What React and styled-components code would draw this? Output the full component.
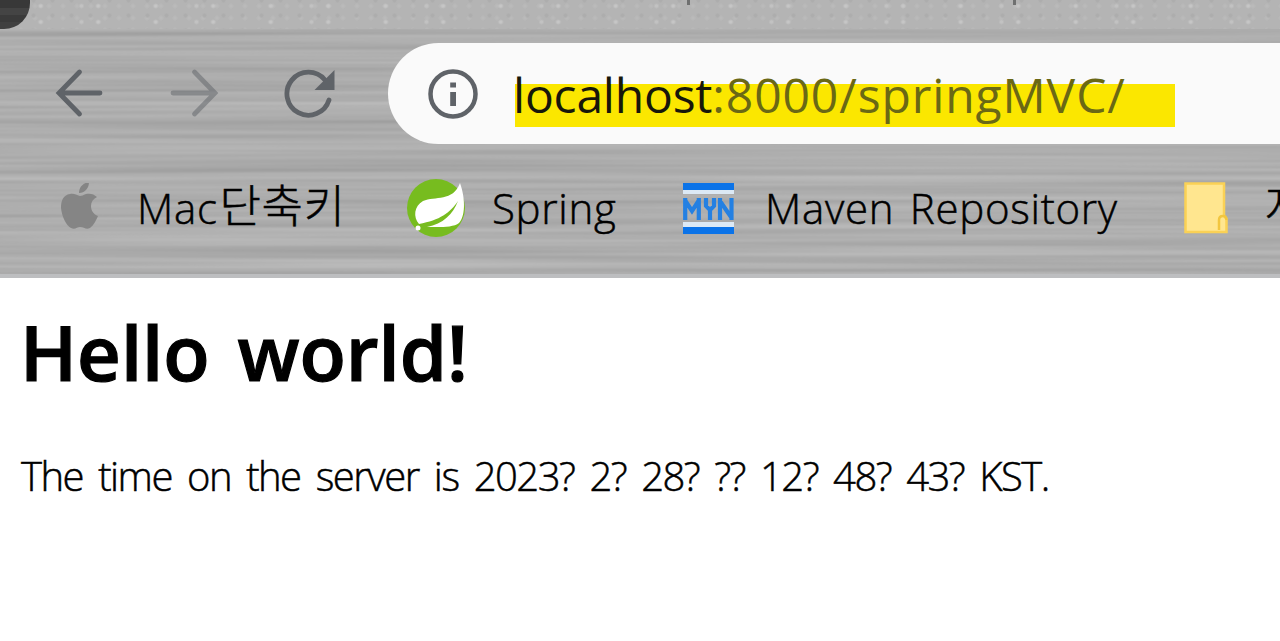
import React from "react"
import styled, { createGlobalStyle } from "styled-components"

const GlobalStyle = createGlobalStyle`
  body {
    margin: 0;
    background: #fff;
    overflow: hidden;
    font-family: "Open Sans", "Noto Sans CJK KR", sans-serif;
  }
`

const Window = styled.div`
  width: 1280px;
  height: 641px;
  overflow: hidden;
  background: #fff;
`

const Chrome = styled.header`
  position: relative;
  isolation: isolate;
  box-sizing: border-box;
  height: 278px;
  overflow: hidden;
  background: #acacac;
`

const Brushed = styled.svg`
  position: absolute;
  inset: 0;
  z-index: -1;
`

const TabStrip = styled.div`
  display: flex;
  height: 29px;
  overflow: hidden;
  background:
    radial-gradient(circle, #c6c6c6 1px, transparent 3px) 12px 14px / 57.5px 16px,
    radial-gradient(circle, #c2c2c2 1px, transparent 3px) 24px 14px / 115px 16px,
    radial-gradient(circle, #adadad 1px, transparent 3px) 5px 8px / 19px 15px,
    radial-gradient(circle, #bababa 1px, transparent 3px) 0 0 / 14px 12px,
    #b4b4b4;
`

const DarkTab = styled.div`
  width: 30px;
  height: 29px;
  border-radius: 0 0 26px 0;
  background: linear-gradient(#383838 0 8px, #444 8px 15px, #3a3a3a 15px 22px, #404040 22px);
`

const Descender = styled.i`
  width: 3px;
  height: 5px;
  margin-left: ${(props) => props.$gap}px;
  background: #6f7070;
`

const Toolbar = styled.div`
  display: flex;
  align-items: center;
  height: 100px;
  padding: 14px 0 0 52px;
`

const NavIcon = styled.svg`
  width: 54px;
  height: 54px;
  margin-right: ${(props) => props.$gap}px;
  flex: none;
  fill: none;
  stroke: #5f6368;
  stroke-width: 4.8;
  stroke-linecap: round;
  opacity: ${(props) => (props.$disabled ? 0.5 : 1)};
`

const AddressBar = styled.div`
  display: flex;
  align-items: center;
  flex: 1;
  box-sizing: border-box;
  height: 101px;
  padding-left: 39px;
  border-radius: 51px 0 0 51px;
  background: #fafafa;
`

const InfoIcon = styled.svg`
  width: 52px;
  height: 52px;
  flex: none;
  margin-right: 35px;
`

const Url = styled.div`
  width: 661px;
  height: 68px;
  box-sizing: border-box;
  line-height: 72px;
  font-size: 48px;
  font-weight: 370;
  text-indent: -1px;
  white-space: nowrap;
  background: linear-gradient(#fbe700, #fbe700) 1px 25px / 660px 43px no-repeat;
`

const UrlText = styled.span`
  letter-spacing: ${(props) => (props.$host ? -0.2 : 0.9)}px;
  color: ${(props) => (props.$host ? "#17170a" : "#6a6815")};
`

const Bookmarks = styled.nav`
  display: flex;
  align-items: center;
  height: 130px;
  padding-left: 60px;
`

const Bookmark = styled.div`
  display: flex;
  align-items: center;
  flex: none;
  width: ${(props) => props.$width}px;
  white-space: nowrap;

  svg {
    flex: none;
    margin-right: ${(props) => props.$gap}px;
  }
`

const Label = styled.span`
  padding-bottom: 1px;
  font-size: 42px;
  font-weight: 340;
  line-height: 58px;
  letter-spacing: 0.7px;
  word-spacing: 4px;
  color: #000;
  -webkit-text-stroke: 0.5px #000;
`

const Korean = styled.span`
  margin-left: 2px;
  font-family: "Noto Sans CJK KR", sans-serif;
  font-size: 45px;
  font-weight: 300;
  line-height: 1;
  letter-spacing: 0.5px;
  vertical-align: 1px;
`

const Page = styled.main`
  padding-left: 20px;
`

const Title = styled.h1`
  margin: 0;
  padding-top: 22px;
  font-size: 76px;
  line-height: 104px;
  font-weight: 640;
  letter-spacing: 0;
  word-spacing: 8px;
  color: #000;
  -webkit-text-stroke: 1.2px #000;
`

const Time = styled.p`
  margin: 0;
  padding: 44px 0 0 1px;
  font-size: 40px;
  line-height: 56px;
  font-weight: 340;
  letter-spacing: -1.5px;
  word-spacing: 6.2px;
  white-space: nowrap;
  color: #000;
  -webkit-text-stroke: 0.5px #000;
`

const BrushedMetal = () => (
  <Brushed width="1280" height="278">
    <filter id="brushed" x="0" y="0" width="100%" height="100%" colorInterpolationFilters="sRGB">
      <feTurbulence type="fractalNoise" baseFrequency="0.0015 0.16" numOctaves="2" seed="8" />
      <feColorMatrix
        values="0.15 0 0 0 0.605
                0.15 0 0 0 0.605
                0.15 0 0 0 0.605
                0 0 0 0 1"
      />
    </filter>
    <rect width="1280" height="278" filter="url(#brushed)" />
    <rect y="274" width="1280" height="4" fill="#bdbec0" />
  </Brushed>
)

const AppleLogo = () => (
  <svg width="42" height="50" viewBox="0 1 42 50" fill="#858585">
    <path d="M19 11C19 5 23 1 29 0C29 6 25 11 19 11Z" />
    <path d="M20 14C16 13 14 11 10 12C3 13 1 19 1 26C2 35 6 43 11 46C15 48 17 45 20 45C24 45 26 48 30 46C34 43 36 38 38 34C33 32 31 28 31 24C31 20 33 17 37 15C34 12 30 11 26 12C23 13 22 14 20 14Z" />
  </svg>
)

const SpringLogo = () => (
  <svg width="60" height="60" viewBox="0 0 60 60">
    <circle cx="30" cy="30" r="29" fill="#77bc1f" />
    <path
      fill="#fff"
      d="M54 5C60 22 59 39 53 45C47 50 31 49 21 49C37 46 47 36 52 23C44 35 34 42 13 46C7 39 8 28 17 23C29 18 47 24 54 5Z"
    />
    <circle cx="12" cy="50" r="2.5" fill="#fff" />
  </svg>
)

const MavenLogo = () => (
  <svg width="53" height="53" viewBox="0 0 53 53">
    <path fill="#dce9f5" d="M1 7H52V12H1ZM1 40H52V45H1Z" />
    <path fill="#0b73e8" d="M1 1H52V8H1ZM1 45H52V52H1Z" />
    <path
      fill="none"
      stroke="#2480e2"
      strokeWidth="4.200"
      d="M3.200 38V16M3.500 19L10 29L16.500 19M16.800 16V38M24 16V24L28 28L32 24V16M28 27V38M38 38V16M38 19L49 35M49.500 16V38"
    />
  </svg>
)

const FolderIcon = () => (
  <svg width="45" height="52" viewBox="0 0 45 52">
    <path
      fill="#ffe68f"
      stroke="#fad155"
      strokeWidth="2.500"
      d="M1.500 1.500H40V34L42.500 37V50H1.500Z"
    />
    <path fill="none" stroke="#f2c63f" strokeWidth="2.500" d="M35 48V38Q35 34 39 34Q42.500 34 42.500 38" />
  </svg>
)

class App extends React.Component {
  render() {
    return (
      <Window>
        <GlobalStyle />
        <Chrome>
          <BrushedMetal />
          <TabStrip>
            <DarkTab />
            <Descender $gap={657} />
            <Descender $gap={323} />
          </TabStrip>
          <Toolbar>
            <NavIcon $gap={61} viewBox="0 0 54 54">
              <path d="M48 27H8M27.500 6L7 27L27.500 48" />
            </NavIcon>
            <NavIcon $gap={61} $disabled viewBox="0 0 54 54">
              <path d="M6 27H47M27.500 6L48 27L27.500 48" />
            </NavIcon>
            <NavIcon $gap={52} viewBox="0 0 54 54">
              <path d="M47 34A21.500 21.500 0 1 1 43 14" />
              <path d="M52.500 4V24H32.500Z" fill="#5f6368" stroke="none" />
            </NavIcon>
            <AddressBar>
              <InfoIcon viewBox="0 0 52 52">
                <circle cx="26" cy="27" r="22.500" fill="none" stroke="#5f6368" strokeWidth="4.500" />
                <path fill="#5f6368" d="M23.200 15.500H29V20.500H23.200ZM23.200 25H29V39H23.200Z" />
              </InfoIcon>
              <Url>
                <UrlText $host>localhost</UrlText>
                <UrlText>:8000/springMVC/</UrlText>
              </Url>
            </AddressBar>
          </Toolbar>
          <Bookmarks>
            <Bookmark $width={346} $gap={35}>
              <AppleLogo />
              <Label>
                Mac<Korean>단축키</Korean>
              </Label>
            </Bookmark>
            <Bookmark $width={276} $gap={26}>
              <SpringLogo />
              <Label>Spring</Label>
            </Bookmark>
            <Bookmark $width={502} $gap={30}>
              <MavenLogo />
              <Label>Maven Repository</Label>
            </Bookmark>
            <Bookmark $width={120} $gap={34}>
              <FolderIcon />
              <Label>
                <Korean>자</Korean>
              </Label>
            </Bookmark>
          </Bookmarks>
        </Chrome>
        <Page>
          <Title>Hello world!</Title>
          <Time>The time on the server is 2023? 2? 28? ?? 12? 48? 43? KST.</Time>
        </Page>
      </Window>
    )
  }
}
export default App
